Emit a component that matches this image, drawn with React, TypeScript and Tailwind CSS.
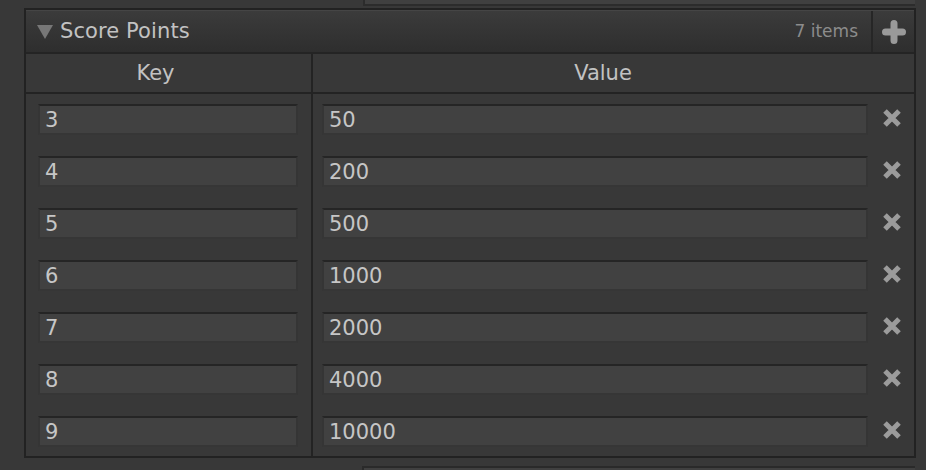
import React from "react"

const ENTRIES: [string, string][] = [
  ["3", "50"],
  ["4", "200"],
  ["5", "500"],
  ["6", "1000"],
  ["7", "2000"],
  ["8", "4000"],
  ["9", "10000"],
]

function Field({ value, className = "" }: { value: string; className?: string }) {
  return (
    <div
      className={`h-[31px] bg-[#414141] border-t-2 border-t-[#252525] border-x-2 border-x-[#353535] border-b-2 border-b-[#363636] pl-[5px] pt-[1px] text-[21px] leading-[27px] text-[#c6c6c6] ${className}`}
    >
      {value}
    </div>
  )
}

function RemoveIcon() {
  return (
    <svg width="20" height="20" viewBox="0 0 20 20" className="block">
      <path
        d="M3 3 L17 17 M17 3 L3 17"
        stroke="#9b9b9b"
        strokeWidth="5"
        strokeLinecap="butt"
      />
    </svg>
  )
}

function AddIcon() {
  return (
    <svg width="24" height="24" viewBox="0 0 24 24" className="block">
      <path
        d="M12 3.5 V20.5 M3.5 12 H20.5"
        stroke="#9a9a9a"
        strokeWidth="7"
        strokeLinecap="round"
      />
    </svg>
  )
}

export default function App() {
  return (
    <div
      className="w-[926px] h-[470px] bg-[#383838] overflow-hidden flex flex-col"
      style={{ fontFamily: '"DejaVu Sans", "Liberation Sans", sans-serif' }}
    >
      {/* field above, cut by the top edge */}
      <div className="h-[8px] flex">
        <div className="ml-[363px] w-[552px] h-[6px] bg-[#404040] border-l-2 border-b-2 border-[#2c2c2c]" />
      </div>

      <div className="ml-[24px] w-[892px] border-2 border-[#222222] bg-[#383838]">
        {/* header */}
        <div className="h-[44px] flex border-b-2 border-[#242424] bg-gradient-to-b from-[#3b3b3b] to-[#2e2e2e] border-t border-t-[#454545]">
          <div className="flex-1 flex items-center pl-[11px]">
            <svg width="16" height="16" viewBox="0 0 16 16" className="block mt-[1px]">
              <path d="M0 1 H16 L8 15 Z" fill="#777777" />
            </svg>
            <span className="ml-[7px] text-[21px] text-[#c2c2c2] tracking-[0.1px]">Score Points</span>
          </div>
          <div className="flex items-center pr-[13px] text-[17px] text-[#8c8c8c]">7 items</div>
          <div className="w-[43px] border-l-2 border-[#262626] flex items-center justify-center">
            <AddIcon />
          </div>
        </div>

        {/* column header */}
        <div className="h-[40px] flex border-b-2 border-[#232323]">
          <div className="w-[285px] flex items-center justify-center pr-[26px] pt-[2px] text-[21px] text-[#c2c2c2]">
            Key
          </div>
          <div className="w-[2px] bg-[#232323]" />
          <div className="flex-1 flex items-center justify-center pr-[21px] pt-[2px] text-[21px] text-[#c2c2c2]">
            Value
          </div>
        </div>

        {/* rows */}
        <div className="flex">
          <div className="w-[285px] flex flex-col gap-[21px] pt-[10px] pb-[9px] pl-[12px] pr-[13px]">
            {ENTRIES.map(([k]) => (
              <Field key={k} value={k} />
            ))}
          </div>
          <div className="w-[2px] bg-[#232323]" />
          <div className="flex-1 flex flex-col gap-[21px] pt-[10px] pb-[9px] pl-[9px]">
            {ENTRIES.map(([k, v]) => (
              <div key={k} className="flex items-center">
                <Field value={v} className="w-[546px]" />
                <div className="flex-1 flex justify-center pl-[1px] pb-[3px]">
                  <RemoveIcon />
                </div>
              </div>
            ))}
          </div>
        </div>
      </div>

      {/* field below, cut by the bottom edge */}
      <div className="mt-[8px] ml-[362px] w-[553px] flex-1 bg-[#404040] border-t-2 border-l-2 border-[#2a2a2a]" />
    </div>
  )
}
